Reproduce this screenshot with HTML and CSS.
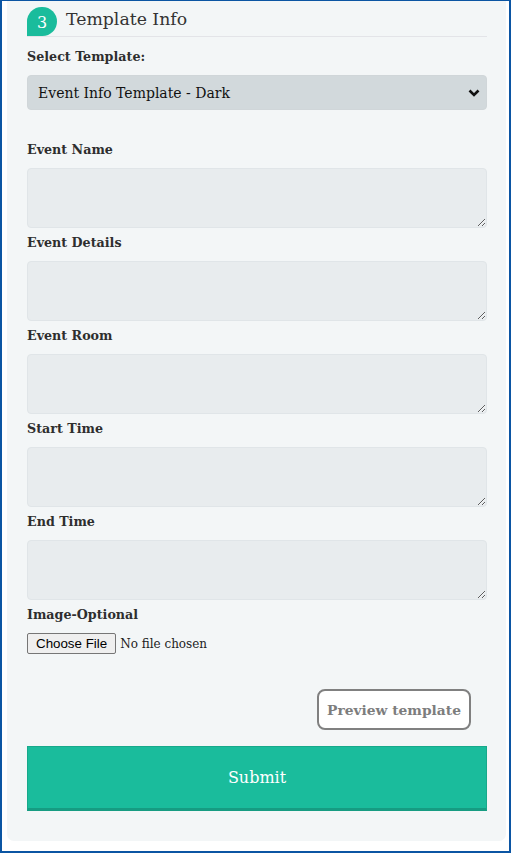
FILE: index.html
```html
<!DOCTYPE html>
<html lang="en">
<head>
<meta charset="utf-8">
<title>Template Info</title>
<link rel="stylesheet" href="styles.css">
</head>
<body>
<div class="frame">
  <form class="card">
    <div class="section-head">
      <span class="step">3</span>
      <h2 class="section-title">Template Info</h2>
    </div>

    <label class="label label-first" for="tpl">Select Template:</label>
    <div class="select-wrap">
      <select id="tpl" class="select">
        <option>Event Info Template - Dark</option>
        <option>Event Info Template - Light</option>
      </select>
      <svg class="chev" width="12" height="8" viewBox="0 0 12 8"><path d="M1.5 1.5 L6 6 L10.5 1.5" fill="none" stroke="#111" stroke-width="2.6"/></svg>
    </div>

    <div class="fields">
      <label class="label" for="f1">Event Name</label>
      <textarea id="f1" class="area"></textarea>
      <label class="label" for="f2">Event Details</label>
      <textarea id="f2" class="area"></textarea>
      <label class="label" for="f3">Event Room</label>
      <textarea id="f3" class="area"></textarea>
      <label class="label" for="f4">Start Time</label>
      <textarea id="f4" class="area"></textarea>
      <label class="label" for="f5">End Time</label>
      <textarea id="f5" class="area"></textarea>
      <label class="label" for="f6">Image-Optional</label>
      <input id="f6" class="file" type="file">
    </div>

    <div class="preview-row">
      <button type="button" class="preview">Preview template</button>
    </div>

    <button type="submit" class="submit">Submit</button>
  </form>
</div>
</body>
</html>
```

FILE: styles.css
```css
html, body {
  margin: 0;
  padding: 0;
  background: #ffffff;
}

body {
  font-family: "DejaVu Serif", Georgia, serif;
  color: #333333;
}

.frame {
  box-sizing: border-box;
  width: 511px;
  height: 853px;
  border: 2px solid #0b55a3;
  border-top-width: 1px;
  padding: 0 3px 0 5px;
  overflow: hidden;
}

.card {
  box-sizing: border-box;
  width: 499px;
  background: #f3f6f7;
  border-radius: 0 0 7px 7px;
  padding: 6px 19px 30px 20px;
  display: flex;
  flex-direction: column;
}

.section-head {
  display: flex;
  align-items: flex-end;
  height: 29px;
  border-bottom: 1px solid #e3e4e8;
}

.step {
  width: 30px;
  height: 29px;
  background: #1abc9c;
  color: #ffffff;
  border-radius: 15px 15px 15px 0;
  font-size: 16px;
  line-height: 31px;
  text-align: center;
}

.section-title {
  margin: 0 0 6px 9px;
  font-weight: normal;
  font-size: 17.3px;
  line-height: 22px;
  color: #333333;
}

.label {
  display: block;
  font-weight: bold;
  font-size: 12.7px;
  line-height: 20px;
  color: #2e2e2e;
  margin-bottom: 8px;
}

.label-first {
  margin-top: 10px;
}

.select-wrap {
  position: relative;
}

.select {
  box-sizing: border-box;
  width: 100%;
  height: 35px;
  appearance: none;
  background: #d2d9dc;
  border: 1px solid #d0d6d9;
  border-radius: 4px;
  padding: 0 10px;
  font-family: "DejaVu Serif", Georgia, serif;
  font-size: 14px;
  color: #111111;
}

.chev {
  position: absolute;
  right: 7px;
  top: 14px;
}

.fields {
  display: flex;
  flex-direction: column;
  margin-top: 30px;
}

.area {
  box-sizing: border-box;
  display: block;
  width: 100%;
  height: 60px;
  background: #e8ecee;
  border: 1px solid #e0e5e8;
  border-radius: 4px;
  margin: 0 0 5px 0;
  resize: vertical;
}

.file {
  font-family: "DejaVu Serif", Georgia, serif;
  font-size: 12px;
  color: #222222;
  height: 21px;
}

.file::file-selector-button {
  font-family: "Liberation Sans", Arial, sans-serif;
  font-size: 13.33px;
  background: #efefef;
  border: 1px solid #767676;
  border-radius: 2px;
  height: 21px;
  padding: 0 8px;
  margin-right: 4px;
  color: #000000;
}

.preview-row {
  display: flex;
  justify-content: flex-end;
  padding-right: 16px;
  margin-top: 35px;
}

.preview {
  width: 154px;
  height: 41px;
  background: #ffffff;
  border: 2px solid #808080;
  border-radius: 8px;
  font-family: "DejaVu Serif", Georgia, serif;
  font-weight: bold;
  font-size: 13.8px;
  color: #7d7d7d;
  padding: 0;
}

.submit {
  margin-top: 16px;
  height: 65px;
  width: 100%;
  background: #1abc9c;
  border: 1px solid #17a98b;
  border-bottom: 3px solid #169c82;
  color: #ffffff;
  font-family: "DejaVu Serif", Georgia, serif;
  font-size: 16px;
}
```
